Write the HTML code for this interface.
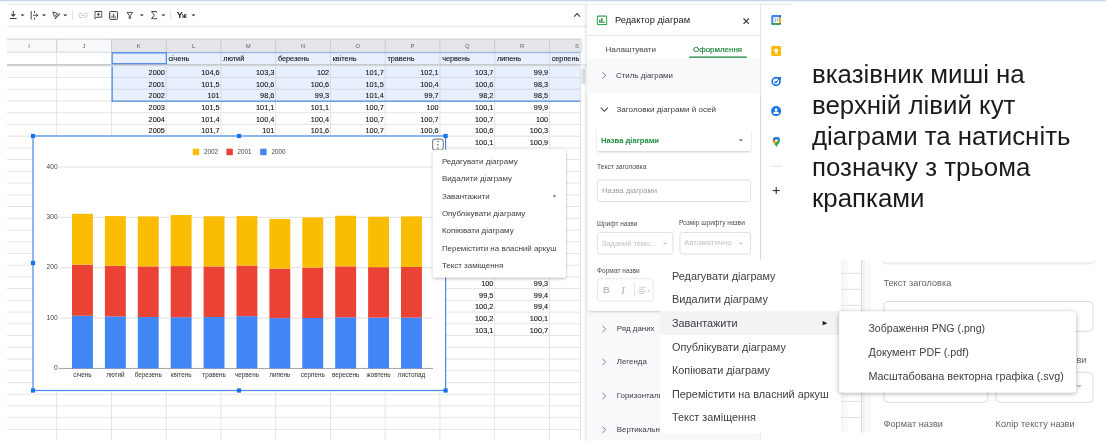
<!DOCTYPE html>
<html><head><meta charset="utf-8"><title>chart menu</title>
<style>
html,body{margin:0;padding:0;background:#fff;}
body{width:1106px;height:445px;position:relative;overflow:hidden;font-family:"Liberation Sans",sans-serif;}
.l{position:absolute;left:0;top:0;width:1106px;height:445px;display:block;will-change:transform;}
.t{position:absolute;white-space:nowrap;line-height:1;}
</style></head><body>
<svg class="l" width="1106" height="445" viewBox="0 0 1106 445"><rect x="0.00" y="0.00" width="1106.00" height="1.30" fill="#c9d3e6" />
<rect x="7.00" y="3.90" width="784.00" height="0.90" fill="#e1e3e6" />
<rect x="7.00" y="25.90" width="580.00" height="0.90" fill="#e2e4e7" />
<svg x="9.00" y="10.50" width="8.5" height="9.5" viewBox="0 0 9 10"><path d="M4.5 0.5v5.2M2.3 3.8l2.2 2.2 2.2-2.2" stroke="#3a3c3b" stroke-width="1.1" fill="none"/><path d="M1 8.4h7" stroke="#3a3c3b" stroke-width="1.1"/></svg>
<svg x="20.45" y="14.20" width="4.3" height="2.35" viewBox="0 0 10 5"><path d="M0 0h10L5 5z" fill="#3a3c3b"/></svg>
<svg x="30.00" y="10.50" width="9" height="9.5" viewBox="0 0 9 10"><path d="M1 0.5v9M4.5 0.5v2M4.5 7.5v2M3 5h5M6.3 3.4L8 5 6.3 6.6" stroke="#3a3c3b" stroke-width="1" fill="none"/></svg>
<svg x="41.85" y="14.20" width="4.3" height="2.35" viewBox="0 0 10 5"><path d="M0 0h10L5 5z" fill="#3a3c3b"/></svg>
<svg x="51.50" y="10.50" width="9.5" height="9.5" viewBox="0 0 9.5 10"><path d="M1 1.6l5.2 1.6-3.2 3.4z" stroke="#3a3c3b" stroke-width="1" fill="none" stroke-linejoin="round"/><path d="M3.2 8.8L8.6 3.2" stroke="#3a3c3b" stroke-width="1.2"/></svg>
<svg x="63.05" y="14.20" width="4.3" height="2.35" viewBox="0 0 10 5"><path d="M0 0h10L5 5z" fill="#3a3c3b"/></svg>
<rect x="72.30" y="10.00" width="0.80" height="10.50" fill="#dadce0" />
<svg x="78.00" y="12.30" width="10" height="6" viewBox="0 0 10 6"><path d="M4.2 0.8H3a2.2 2.2 0 0 0 0 4.4h1.2M5.8 0.8H7a2.2 2.2 0 0 1 0 4.4H5.8M3.2 3h3.6" fill="none" stroke="#c0c3c1" stroke-width="1"/></svg>
<svg x="94.30" y="11.00" width="8.2" height="8.6" viewBox="0 0 8.2 8.6"><path d="M0.6 0.6h7v5.6h-5.4l-1.6 1.6z" fill="none" stroke="#3a3c3b" stroke-width="1"/><path d="M4.1 1.9v3M2.6 3.4h3" stroke="#3a3c3b" stroke-width="0.9"/></svg>
<svg x="109.00" y="10.80" width="9.2" height="9.2" viewBox="0 0 9.2 9.2"><rect x="0.6" y="0.6" width="8" height="8" rx="1" fill="#eceff1" stroke="#3a3c3b" stroke-width="1"/><path d="M3 7V5M4.6 7V3M6.2 7V5.6" stroke="#3a3c3b" stroke-width="0.9"/></svg>
<svg x="126.30" y="11.80" width="7" height="7.2" viewBox="0 0 7 7.2"><path d="M0.6 0.6h5.8l-2.3 3v3h-1.2v-3z" fill="none" stroke="#3a3c3b" stroke-width="0.9" stroke-linejoin="round"/></svg>
<svg x="139.65" y="14.20" width="4.3" height="2.35" viewBox="0 0 10 5"><path d="M0 0h10L5 5z" fill="#3a3c3b"/></svg>
<svg x="150.80" y="11.00" width="6.4" height="8.4" viewBox="0 0 6.4 8.4"><path d="M5.9 1.6V0.6H0.7L3.6 4.2 0.7 7.8h5.2v-1" fill="none" stroke="#3a3c3b" stroke-width="1"/></svg>
<svg x="161.25" y="14.20" width="4.3" height="2.35" viewBox="0 0 10 5"><path d="M0 0h10L5 5z" fill="#3a3c3b"/></svg>
<rect x="170.30" y="10.00" width="0.80" height="10.50" fill="#dadce0" />
<svg x="191.25" y="14.20" width="4.3" height="2.35" viewBox="0 0 10 5"><path d="M0 0h10L5 5z" fill="#3a3c3b"/></svg>
<svg x="573.60" y="12.60" width="7" height="4.6" viewBox="0 0 7 4.6"><path d="M0.6 4L3.5 1 6.4 4" fill="none" stroke="#3a3c3b" stroke-width="1.1"/></svg>
<rect x="7.00" y="39.00" width="573.40" height="13.10" fill="#f8f9fa" />
<rect x="111.45" y="39.00" width="468.95" height="13.10" fill="#e4e6e9" />
<rect x="7.00" y="38.60" width="573.40" height="0.90" fill="#c8cacc" />
<rect x="56.25" y="39.00" width="0.90" height="13.00" fill="#c6c8cb" />
<rect x="111.00" y="39.00" width="0.90" height="13.00" fill="#c6c8cb" />
<rect x="165.75" y="39.00" width="0.90" height="13.00" fill="#c6c8cb" />
<rect x="220.50" y="39.00" width="0.90" height="13.00" fill="#c6c8cb" />
<rect x="275.25" y="39.00" width="0.90" height="13.00" fill="#c6c8cb" />
<rect x="330.00" y="39.00" width="0.90" height="13.00" fill="#c6c8cb" />
<rect x="384.75" y="39.00" width="0.90" height="13.00" fill="#c6c8cb" />
<rect x="439.50" y="39.00" width="0.90" height="13.00" fill="#c6c8cb" />
<rect x="494.25" y="39.00" width="0.90" height="13.00" fill="#c6c8cb" />
<rect x="549.00" y="39.00" width="0.90" height="13.00" fill="#c6c8cb" />
<rect x="111.45" y="52.10" width="468.95" height="48.86" fill="#e8f0fe" />
<rect x="7.00" y="77.05" width="573.40" height="0.90" fill="#e1e2e3" />
<rect x="7.00" y="88.78" width="573.40" height="0.90" fill="#e1e2e3" />
<rect x="7.00" y="100.51" width="573.40" height="0.90" fill="#e1e2e3" />
<rect x="7.00" y="112.24" width="573.40" height="0.90" fill="#e1e2e3" />
<rect x="7.00" y="123.97" width="573.40" height="0.90" fill="#e1e2e3" />
<rect x="7.00" y="135.70" width="573.40" height="0.90" fill="#e1e2e3" />
<rect x="7.00" y="147.43" width="573.40" height="0.90" fill="#e1e2e3" />
<rect x="7.00" y="159.16" width="573.40" height="0.90" fill="#e1e2e3" />
<rect x="7.00" y="170.89" width="573.40" height="0.90" fill="#e1e2e3" />
<rect x="7.00" y="182.62" width="573.40" height="0.90" fill="#e1e2e3" />
<rect x="7.00" y="194.35" width="573.40" height="0.90" fill="#e1e2e3" />
<rect x="7.00" y="206.08" width="573.40" height="0.90" fill="#e1e2e3" />
<rect x="7.00" y="217.81" width="573.40" height="0.90" fill="#e1e2e3" />
<rect x="7.00" y="229.54" width="573.40" height="0.90" fill="#e1e2e3" />
<rect x="7.00" y="241.27" width="573.40" height="0.90" fill="#e1e2e3" />
<rect x="7.00" y="253.00" width="573.40" height="0.90" fill="#e1e2e3" />
<rect x="7.00" y="264.73" width="573.40" height="0.90" fill="#e1e2e3" />
<rect x="7.00" y="276.46" width="573.40" height="0.90" fill="#e1e2e3" />
<rect x="7.00" y="288.19" width="573.40" height="0.90" fill="#e1e2e3" />
<rect x="7.00" y="299.92" width="573.40" height="0.90" fill="#e1e2e3" />
<rect x="7.00" y="311.65" width="573.40" height="0.90" fill="#e1e2e3" />
<rect x="7.00" y="323.38" width="573.40" height="0.90" fill="#e1e2e3" />
<rect x="7.00" y="335.11" width="573.40" height="0.90" fill="#e1e2e3" />
<rect x="7.00" y="346.84" width="573.40" height="0.90" fill="#e1e2e3" />
<rect x="7.00" y="358.57" width="573.40" height="0.90" fill="#e1e2e3" />
<rect x="7.00" y="370.30" width="573.40" height="0.90" fill="#e1e2e3" />
<rect x="7.00" y="382.03" width="573.40" height="0.90" fill="#e1e2e3" />
<rect x="7.00" y="393.76" width="573.40" height="0.90" fill="#e1e2e3" />
<rect x="7.00" y="405.49" width="573.40" height="0.90" fill="#e1e2e3" />
<rect x="7.00" y="417.22" width="573.40" height="0.90" fill="#e1e2e3" />
<rect x="7.00" y="428.95" width="573.40" height="0.90" fill="#e1e2e3" />
<rect x="7.00" y="51.70" width="573.40" height="0.90" fill="#cfd1d4" />
<rect x="56.25" y="52.00" width="0.90" height="388.00" fill="#e1e2e3" />
<rect x="111.00" y="52.00" width="0.90" height="388.00" fill="#e1e2e3" />
<rect x="165.75" y="52.00" width="0.90" height="388.00" fill="#e1e2e3" />
<rect x="220.50" y="52.00" width="0.90" height="388.00" fill="#e1e2e3" />
<rect x="275.25" y="52.00" width="0.90" height="388.00" fill="#e1e2e3" />
<rect x="330.00" y="52.00" width="0.90" height="388.00" fill="#e1e2e3" />
<rect x="384.75" y="52.00" width="0.90" height="388.00" fill="#e1e2e3" />
<rect x="439.50" y="52.00" width="0.90" height="388.00" fill="#e1e2e3" />
<rect x="494.25" y="52.00" width="0.90" height="388.00" fill="#e1e2e3" />
<rect x="549.00" y="52.00" width="0.90" height="388.00" fill="#e1e2e3" />
<rect x="111.45" y="77.05" width="468.95" height="0.90" fill="#d2dcf2" />
<rect x="111.45" y="88.78" width="468.95" height="0.90" fill="#d2dcf2" />
<rect x="165.75" y="52.00" width="0.90" height="48.96" fill="#d2dcf2" />
<rect x="220.50" y="52.00" width="0.90" height="48.96" fill="#d2dcf2" />
<rect x="275.25" y="52.00" width="0.90" height="48.96" fill="#d2dcf2" />
<rect x="330.00" y="52.00" width="0.90" height="48.96" fill="#d2dcf2" />
<rect x="384.75" y="52.00" width="0.90" height="48.96" fill="#d2dcf2" />
<rect x="439.50" y="52.00" width="0.90" height="48.96" fill="#d2dcf2" />
<rect x="494.25" y="52.00" width="0.90" height="48.96" fill="#d2dcf2" />
<rect x="549.00" y="52.00" width="0.90" height="48.96" fill="#d2dcf2" />
<rect x="579.95" y="39.00" width="0.90" height="401.60" fill="#dcddde" />
<defs><linearGradient id="fz" x1="0" y1="0" x2="0" y2="1"><stop offset="0" stop-color="#bdbfc2"/><stop offset="1" stop-color="#e2e3e5"/></linearGradient></defs>
<rect x="7.00" y="64.10" width="573.40" height="2.30" fill="url(#fz)" />
<rect x="580.40" y="64.10" width="6.40" height="2.30" fill="#e6e7e9" />
<rect x="580.40" y="39.00" width="1.80" height="13.10" fill="#e4e6e9" />
<rect x="111.55" y="66.40" width="1.20" height="35.06" fill="#4a86e8" />
<rect x="111.55" y="100.56" width="468.95" height="1.20" fill="#4a86e8" />
<rect x="111.45" y="52.20" width="468.95" height="1.00" fill="#8db0ee" />
<rect x="112.15" y="52.90" width="54.15" height="10.80" fill="#e8f0fe" stroke="#4a86e8" stroke-width="1.2" />
<rect x="581.60" y="68.00" width="3.80" height="16.00" fill="#dadce0" rx="1.9" />
<rect x="33.00" y="136.00" width="412.60" height="254.50" fill="#fff" stroke="#4a86e8" stroke-width="1.2" />
<rect x="58.60" y="166.55" width="374.40" height="0.90" fill="#dedede" />
<rect x="58.60" y="216.90" width="374.40" height="0.90" fill="#dedede" />
<rect x="58.60" y="267.25" width="374.40" height="0.90" fill="#dedede" />
<rect x="58.60" y="317.60" width="374.40" height="0.90" fill="#dedede" />
<rect x="58.60" y="367.95" width="374.40" height="0.90" fill="#9a9a9a" />
<rect x="72.00" y="315.73" width="20.90" height="52.67" fill="#4285f4" />
<rect x="72.00" y="264.63" width="20.90" height="51.11" fill="#ea4335" />
<rect x="72.00" y="213.78" width="20.90" height="50.85" fill="#fbbc04" />
<rect x="104.90" y="316.39" width="20.90" height="52.01" fill="#4285f4" />
<rect x="104.90" y="265.74" width="20.90" height="50.65" fill="#ea4335" />
<rect x="104.90" y="216.09" width="20.90" height="49.65" fill="#fbbc04" />
<rect x="137.80" y="317.04" width="20.90" height="51.36" fill="#4285f4" />
<rect x="137.80" y="266.39" width="20.90" height="50.65" fill="#ea4335" />
<rect x="137.80" y="216.39" width="20.90" height="50.00" fill="#fbbc04" />
<rect x="170.70" y="317.19" width="20.90" height="51.21" fill="#4285f4" />
<rect x="170.70" y="266.09" width="20.90" height="51.11" fill="#ea4335" />
<rect x="170.70" y="215.03" width="20.90" height="51.05" fill="#fbbc04" />
<rect x="203.60" y="316.99" width="20.90" height="51.41" fill="#4285f4" />
<rect x="203.60" y="266.44" width="20.90" height="50.55" fill="#ea4335" />
<rect x="203.60" y="216.24" width="20.90" height="50.20" fill="#fbbc04" />
<rect x="236.50" y="316.19" width="20.90" height="52.21" fill="#4285f4" />
<rect x="236.50" y="265.53" width="20.90" height="50.65" fill="#ea4335" />
<rect x="236.50" y="216.09" width="20.90" height="49.44" fill="#fbbc04" />
<rect x="269.40" y="318.10" width="20.90" height="50.30" fill="#4285f4" />
<rect x="269.40" y="268.61" width="20.90" height="49.49" fill="#ea4335" />
<rect x="269.40" y="219.01" width="20.90" height="49.59" fill="#fbbc04" />
<rect x="302.30" y="318.00" width="20.90" height="50.40" fill="#4285f4" />
<rect x="302.30" y="267.55" width="20.90" height="50.45" fill="#ea4335" />
<rect x="302.30" y="217.40" width="20.90" height="50.15" fill="#fbbc04" />
<rect x="335.20" y="317.35" width="20.90" height="51.05" fill="#4285f4" />
<rect x="335.20" y="266.34" width="20.90" height="51.00" fill="#ea4335" />
<rect x="335.20" y="215.79" width="20.90" height="50.55" fill="#fbbc04" />
<rect x="368.10" y="317.65" width="20.90" height="50.75" fill="#4285f4" />
<rect x="368.10" y="267.15" width="20.90" height="50.50" fill="#ea4335" />
<rect x="368.10" y="216.70" width="20.90" height="50.45" fill="#fbbc04" />
<rect x="401.00" y="317.60" width="20.90" height="50.80" fill="#4285f4" />
<rect x="401.00" y="266.94" width="20.90" height="50.65" fill="#ea4335" />
<rect x="401.00" y="216.34" width="20.90" height="50.60" fill="#fbbc04" />
<rect x="192.80" y="148.70" width="6.40" height="6.50" fill="#fbbc04" />
<rect x="226.40" y="148.70" width="6.40" height="6.50" fill="#ea4335" />
<rect x="260.20" y="148.70" width="6.40" height="6.50" fill="#4285f4" />
<rect x="30.90" y="133.90" width="4.20" height="4.20" fill="#1a73e8" />
<rect x="236.90" y="133.90" width="4.20" height="4.20" fill="#1a73e8" />
<rect x="443.50" y="133.90" width="4.20" height="4.20" fill="#1a73e8" />
<rect x="30.90" y="260.90" width="4.20" height="4.20" fill="#1a73e8" />
<rect x="443.50" y="260.90" width="4.20" height="4.20" fill="#1a73e8" />
<rect x="30.90" y="388.40" width="4.20" height="4.20" fill="#1a73e8" />
<rect x="236.90" y="388.40" width="4.20" height="4.20" fill="#1a73e8" />
<rect x="443.50" y="388.40" width="4.20" height="4.20" fill="#1a73e8" />
<rect x="432.60" y="139.10" width="10.70" height="10.80" fill="#fff" rx="2.4" stroke="#8a8a8a" stroke-width="1.2" />
<circle cx="437.9" cy="141.5" r="0.75" fill="#4d4d4d"/>
<circle cx="437.9" cy="144.7" r="0.75" fill="#4d4d4d"/>
<circle cx="437.9" cy="147.9" r="0.75" fill="#4d4d4d"/>
<defs>
<filter id="sh1" x="-20%" y="-20%" width="140%" height="140%"><feGaussianBlur in="SourceAlpha" stdDeviation="1.6"/><feOffset dx="0" dy="0.8"/><feComponentTransfer><feFuncA type="linear" slope="0.32"/></feComponentTransfer><feMerge><feMergeNode/><feMergeNode in="SourceGraphic"/></feMerge></filter>
<filter id="sh2" x="-20%" y="-20%" width="140%" height="140%"><feGaussianBlur in="SourceAlpha" stdDeviation="2.6"/><feOffset dx="0" dy="1.2"/><feComponentTransfer><feFuncA type="linear" slope="0.34"/></feComponentTransfer><feMerge><feMergeNode/><feMergeNode in="SourceGraphic"/></feMerge></filter>
<filter id="sh3" x="-5%" y="-20%" width="110%" height="140%"><feGaussianBlur in="SourceAlpha" stdDeviation="0.9"/><feOffset dx="0" dy="0.5"/><feComponentTransfer><feFuncA type="linear" slope="0.2"/></feComponentTransfer><feMerge><feMergeNode/><feMergeNode in="SourceGraphic"/></feMerge></filter>
<linearGradient id="sbs" x1="0" y1="0" x2="1" y2="0"><stop offset="0" stop-color="#000" stop-opacity="0"/><stop offset="1" stop-color="#000" stop-opacity="0.09"/></linearGradient>
</defs>
<rect x="583.50" y="4.80" width="3.50" height="436.00" fill="url(#sbs)" />
<rect x="587.00" y="4.80" width="173.00" height="435.60" fill="#f8f9fa" />
<rect x="587.00" y="4.80" width="173.00" height="54.00" fill="#fff" />
<rect x="759.90" y="4.80" width="0.90" height="435.60" fill="#e2e3e5" />
<rect x="587.00" y="34.90" width="173.00" height="0.90" fill="#e1e3e6" />
<svg x="596.50" y="15.30" width="11" height="10" viewBox="0 0 11 10"><rect x="0.7" y="0.7" width="9.6" height="8.6" rx="1.2" fill="#fff" stroke="#34a853" stroke-width="1.3"/><path d="M3.4 7.6V4.4M5.4 7.6V2.7M7.5 7.6V6.3" stroke="#188038" stroke-width="1.3"/></svg>
<svg x="743.00" y="18.00" width="6.4" height="6.4" viewBox="0 0 6.4 6.4"><path d="M0.5 0.5l5.4 5.4M5.9 0.5L0.5 5.9" stroke="#3c4043" stroke-width="1.15"/></svg>
<rect x="689.00" y="56.40" width="58.00" height="1.30" fill="#188038" rx="0.6" />
<svg x="601.80" y="71.60" width="4.6" height="7.4" viewBox="0 0 4.6 7.4"><path d="M0.6 0.5l3.3 3.2-3.3 3.2" fill="none" stroke="#5f6368" stroke-width="0.8"/></svg>
<rect x="587.50" y="92.50" width="172.50" height="218.30" fill="#fff" rx="3" filter="url(#sh3)"/>
<svg x="600.20" y="107.00" width="8.2" height="5.2" viewBox="0 0 7.6 4.8"><path d="M0.5 0.6l3.3 3.4 3.3-3.4" fill="none" stroke="#444746" stroke-width="1"/></svg>
<rect x="597.00" y="128.50" width="154.00" height="22.50" fill="#fff" rx="2.5" filter="url(#sh3)"/>
<svg x="738.65" y="139.20" width="4.5" height="2.45" viewBox="0 0 10 5"><path d="M0 0h10L5 5z" fill="#5f6368"/></svg>
<rect x="597.45" y="179.95" width="153.10" height="21.60" fill="#fff" rx="2.5" stroke="#dadce0" stroke-width="0.9" />
<rect x="597.45" y="232.45" width="75.60" height="21.60" fill="#fff" rx="2.5" stroke="#dadce0" stroke-width="0.9" />
<rect x="679.95" y="232.45" width="70.60" height="21.60" fill="#fff" rx="2.5" stroke="#dadce0" stroke-width="0.9" />
<svg x="662.65" y="242.40" width="4.3" height="2.35" viewBox="0 0 10 5"><path d="M0 0h10L5 5z" fill="#bdc1c6"/></svg>
<svg x="738.65" y="242.40" width="4.3" height="2.35" viewBox="0 0 10 5"><path d="M0 0h10L5 5z" fill="#bdc1c6"/></svg>
<rect x="597.45" y="278.75" width="55.80" height="22.30" fill="#fff" rx="2.5" stroke="#e3e5e8" stroke-width="0.9" />
<rect x="633.90" y="283.20" width="0.80" height="13.50" fill="#dadce0" />
<svg x="639.00" y="286.50" width="7.4" height="7.4" viewBox="0 0 7.2 7.4"><path d="M0 0.6h7.2M0 2.7h4.8M0 4.8h7.2M0 6.9h4.8" stroke="#bdc1c6" stroke-width="0.9"/></svg>
<svg x="647.25" y="290.10" width="3.3" height="1.8499999999999999" viewBox="0 0 10 5"><path d="M0 0h10L5 5z" fill="#bdc1c6"/></svg>
<svg x="601.80" y="325.30" width="4.6" height="7.4" viewBox="0 0 4.6 7.4"><path d="M0.6 0.5l3.3 3.2-3.3 3.2" fill="none" stroke="#5f6368" stroke-width="0.8"/></svg>
<svg x="601.80" y="358.30" width="4.6" height="7.4" viewBox="0 0 4.6 7.4"><path d="M0.6 0.5l3.3 3.2-3.3 3.2" fill="none" stroke="#5f6368" stroke-width="0.8"/></svg>
<svg x="601.80" y="392.30" width="4.6" height="7.4" viewBox="0 0 4.6 7.4"><path d="M0.6 0.5l3.3 3.2-3.3 3.2" fill="none" stroke="#5f6368" stroke-width="0.8"/></svg>
<svg x="601.80" y="426.10" width="4.6" height="7.4" viewBox="0 0 4.6 7.4"><path d="M0.6 0.5l3.3 3.2-3.3 3.2" fill="none" stroke="#5f6368" stroke-width="0.8"/></svg>
<svg x="771.00" y="14.80" width="10.4" height="10.6" viewBox="0 0 10.4 10.6"><rect x="0.3" y="0.3" width="9.8" height="10" rx="1.4" fill="#4285f4"/><rect x="2.3" y="2.4" width="5.9" height="5.8" fill="#fff"/><path d="M8.2 2.4h1.9v5.8h-1.9z" fill="#fbbc04"/><path d="M8.2 0.3h0.5a1.4 1.4 0 0 1 1.4 1.4v0.7H8.2z" fill="#1967d2"/><path d="M0.3 8.2h7.9v2.1H1.7a1.4 1.4 0 0 1-1.4-1.4z" fill="#34a853"/><path d="M8.2 8.2h1.9l-1.9 2.1z" fill="#ea4335"/><path d="M3.7 4h1v2.6M3.7 6.6h1.4M6 4h0.9v2.6" stroke="#4285f4" stroke-width="0.7" fill="none"/></svg>
<svg x="771.00" y="45.80" width="10.4" height="10.6" viewBox="0 0 10.4 10.6"><rect x="0.3" y="0.3" width="9.8" height="10" rx="1.3" fill="#fbbc04"/><circle cx="5.2" cy="4.5" r="1.9" fill="#fff"/><rect x="4.1" y="6.6" width="2.2" height="1.3" fill="#fff"/></svg>
<svg x="771.00" y="76.00" width="10.4" height="10.6" viewBox="0 0 10.4 10.6"><circle cx="5.1" cy="5.5" r="3.9" fill="none" stroke="#1a73e8" stroke-width="1.7"/><path d="M3.5 5.5l1.3 1.3L7 4.4" fill="none" stroke="#1a73e8" stroke-width="1.3"/><circle cx="8.4" cy="2.5" r="1.5" fill="#0b57d0"/><path d="M8.4 2.5l1.6-1.6" stroke="#1a73e8" stroke-width="1.2"/></svg>
<svg x="771.00" y="106.00" width="10.2" height="10.2" viewBox="0 0 10.2 10.2"><circle cx="5.1" cy="5.1" r="5" fill="#1a73e8"/><circle cx="5.1" cy="3.8" r="1.5" fill="#fff"/><path d="M2.2 7.6c0-1.5 1.9-2 2.9-2s2.9 0.5 2.9 2v0.4H2.2z" fill="#fff"/></svg>
<svg x="772.60" y="136.80" width="7.6" height="10.4" viewBox="0 0 7.6 10.4"><clipPath id="pin"><path d="M3.8 0.2a3.6 3.6 0 0 0-3.6 3.6c0 2.4 2.4 3.8 3.6 6.4 1.2-2.6 3.6-4 3.6-6.4A3.6 3.6 0 0 0 3.8 0.2z"/></clipPath><g clip-path="url(#pin)"><rect width="7.6" height="10.4" fill="#34a853"/><path d="M3.8 3.8L-2 6.5V-2H10V1.5z" fill="#1a73e8"/><path d="M3.8 3.8L-2 1.2V6z" fill="#ea4335"/><path d="M3.8 3.8L-2 5.6 1.8 8.2z" fill="#fbbc04"/></g><circle cx="3.8" cy="3.8" r="1.25" fill="#fff"/></svg>
<rect x="771.00" y="165.80" width="11.00" height="0.80" fill="#dadce0" />
<svg x="772.40" y="186.80" width="7.6" height="7.6" viewBox="0 0 7.6 7.6"><path d="M3.8 0.2v7.2M0.2 3.8h7.2" stroke="#202124" stroke-width="1"/></svg></svg>
<div class="l"><span class="t" style="top:11.38px;font-size:9px;color:#202124;font-weight:700;left:176.80px;">Y</span>
<span class="t" style="top:13.41px;font-size:6.6px;color:#202124;font-weight:700;left:182.00px;">ж</span>
<span class="t" style="top:43.81px;font-size:5.9px;color:#5f6368;left:-120.90px;width:300px;text-align:center;">I</span>
<span class="t" style="top:43.81px;font-size:5.9px;color:#5f6368;left:-65.92px;width:300px;text-align:center;">J</span>
<span class="t" style="top:43.81px;font-size:5.9px;color:#5f6368;left:-11.18px;width:300px;text-align:center;">K</span>
<span class="t" style="top:43.81px;font-size:5.9px;color:#5f6368;left:43.57px;width:300px;text-align:center;">L</span>
<span class="t" style="top:43.81px;font-size:5.9px;color:#5f6368;left:98.32px;width:300px;text-align:center;">M</span>
<span class="t" style="top:43.81px;font-size:5.9px;color:#5f6368;left:153.07px;width:300px;text-align:center;">N</span>
<span class="t" style="top:43.81px;font-size:5.9px;color:#5f6368;left:207.82px;width:300px;text-align:center;">O</span>
<span class="t" style="top:43.81px;font-size:5.9px;color:#5f6368;left:262.57px;width:300px;text-align:center;">P</span>
<span class="t" style="top:43.81px;font-size:5.9px;color:#5f6368;left:317.32px;width:300px;text-align:center;">Q</span>
<span class="t" style="top:43.81px;font-size:5.9px;color:#5f6368;left:372.08px;width:300px;text-align:center;">R</span>
<span class="t" style="top:43.81px;font-size:5.9px;color:#5f6368;right:527.20px;">S</span>
<span class="t" style="top:54.82px;font-size:7.3px;color:#111;left:168.40px;-webkit-text-stroke:0.1px #111;">січень</span>
<span class="t" style="top:54.82px;font-size:7.3px;color:#111;left:223.15px;-webkit-text-stroke:0.1px #111;">лютий</span>
<span class="t" style="top:54.82px;font-size:7.3px;color:#111;left:277.90px;-webkit-text-stroke:0.1px #111;">березень</span>
<span class="t" style="top:54.82px;font-size:7.3px;color:#111;left:332.65px;-webkit-text-stroke:0.1px #111;">квітень</span>
<span class="t" style="top:54.82px;font-size:7.3px;color:#111;left:387.40px;-webkit-text-stroke:0.1px #111;">травень</span>
<span class="t" style="top:54.82px;font-size:7.3px;color:#111;left:442.15px;-webkit-text-stroke:0.1px #111;">червень</span>
<span class="t" style="top:54.82px;font-size:7.3px;color:#111;left:496.90px;-webkit-text-stroke:0.1px #111;">липень</span>
<span class="t" style="top:54.82px;font-size:7.3px;color:#111;left:551.65px;-webkit-text-stroke:0.1px #111;">серпень</span>
<span class="t" style="top:68.82px;font-size:7.3px;color:#111;right:941.20px;-webkit-text-stroke:0.1px #111;">2000</span>
<span class="t" style="top:68.82px;font-size:7.3px;color:#111;right:886.45px;-webkit-text-stroke:0.1px #111;">104,6</span>
<span class="t" style="top:68.82px;font-size:7.3px;color:#111;right:831.70px;-webkit-text-stroke:0.1px #111;">103,3</span>
<span class="t" style="top:68.82px;font-size:7.3px;color:#111;right:776.95px;-webkit-text-stroke:0.1px #111;">102</span>
<span class="t" style="top:68.82px;font-size:7.3px;color:#111;right:722.20px;-webkit-text-stroke:0.1px #111;">101,7</span>
<span class="t" style="top:68.82px;font-size:7.3px;color:#111;right:667.45px;-webkit-text-stroke:0.1px #111;">102,1</span>
<span class="t" style="top:68.82px;font-size:7.3px;color:#111;right:612.70px;-webkit-text-stroke:0.1px #111;">103,7</span>
<span class="t" style="top:68.82px;font-size:7.3px;color:#111;right:557.95px;-webkit-text-stroke:0.1px #111;">99,9</span>
<span class="t" style="top:80.55px;font-size:7.3px;color:#111;right:941.20px;-webkit-text-stroke:0.1px #111;">2001</span>
<span class="t" style="top:80.55px;font-size:7.3px;color:#111;right:886.45px;-webkit-text-stroke:0.1px #111;">101,5</span>
<span class="t" style="top:80.55px;font-size:7.3px;color:#111;right:831.70px;-webkit-text-stroke:0.1px #111;">100,6</span>
<span class="t" style="top:80.55px;font-size:7.3px;color:#111;right:776.95px;-webkit-text-stroke:0.1px #111;">100,6</span>
<span class="t" style="top:80.55px;font-size:7.3px;color:#111;right:722.20px;-webkit-text-stroke:0.1px #111;">101,5</span>
<span class="t" style="top:80.55px;font-size:7.3px;color:#111;right:667.45px;-webkit-text-stroke:0.1px #111;">100,4</span>
<span class="t" style="top:80.55px;font-size:7.3px;color:#111;right:612.70px;-webkit-text-stroke:0.1px #111;">100,6</span>
<span class="t" style="top:80.55px;font-size:7.3px;color:#111;right:557.95px;-webkit-text-stroke:0.1px #111;">98,3</span>
<span class="t" style="top:92.28px;font-size:7.3px;color:#111;right:941.20px;-webkit-text-stroke:0.1px #111;">2002</span>
<span class="t" style="top:92.28px;font-size:7.3px;color:#111;right:886.45px;-webkit-text-stroke:0.1px #111;">101</span>
<span class="t" style="top:92.28px;font-size:7.3px;color:#111;right:831.70px;-webkit-text-stroke:0.1px #111;">98,6</span>
<span class="t" style="top:92.28px;font-size:7.3px;color:#111;right:776.95px;-webkit-text-stroke:0.1px #111;">99,3</span>
<span class="t" style="top:92.28px;font-size:7.3px;color:#111;right:722.20px;-webkit-text-stroke:0.1px #111;">101,4</span>
<span class="t" style="top:92.28px;font-size:7.3px;color:#111;right:667.45px;-webkit-text-stroke:0.1px #111;">99,7</span>
<span class="t" style="top:92.28px;font-size:7.3px;color:#111;right:612.70px;-webkit-text-stroke:0.1px #111;">98,2</span>
<span class="t" style="top:92.28px;font-size:7.3px;color:#111;right:557.95px;-webkit-text-stroke:0.1px #111;">98,5</span>
<span class="t" style="top:104.01px;font-size:7.3px;color:#111;right:941.20px;-webkit-text-stroke:0.1px #111;">2003</span>
<span class="t" style="top:104.01px;font-size:7.3px;color:#111;right:886.45px;-webkit-text-stroke:0.1px #111;">101,5</span>
<span class="t" style="top:104.01px;font-size:7.3px;color:#111;right:831.70px;-webkit-text-stroke:0.1px #111;">101,1</span>
<span class="t" style="top:104.01px;font-size:7.3px;color:#111;right:776.95px;-webkit-text-stroke:0.1px #111;">101,1</span>
<span class="t" style="top:104.01px;font-size:7.3px;color:#111;right:722.20px;-webkit-text-stroke:0.1px #111;">100,7</span>
<span class="t" style="top:104.01px;font-size:7.3px;color:#111;right:667.45px;-webkit-text-stroke:0.1px #111;">100</span>
<span class="t" style="top:104.01px;font-size:7.3px;color:#111;right:612.70px;-webkit-text-stroke:0.1px #111;">100,1</span>
<span class="t" style="top:104.01px;font-size:7.3px;color:#111;right:557.95px;-webkit-text-stroke:0.1px #111;">99,9</span>
<span class="t" style="top:115.74px;font-size:7.3px;color:#111;right:941.20px;-webkit-text-stroke:0.1px #111;">2004</span>
<span class="t" style="top:115.74px;font-size:7.3px;color:#111;right:886.45px;-webkit-text-stroke:0.1px #111;">101,4</span>
<span class="t" style="top:115.74px;font-size:7.3px;color:#111;right:831.70px;-webkit-text-stroke:0.1px #111;">100,4</span>
<span class="t" style="top:115.74px;font-size:7.3px;color:#111;right:776.95px;-webkit-text-stroke:0.1px #111;">100,4</span>
<span class="t" style="top:115.74px;font-size:7.3px;color:#111;right:722.20px;-webkit-text-stroke:0.1px #111;">100,7</span>
<span class="t" style="top:115.74px;font-size:7.3px;color:#111;right:667.45px;-webkit-text-stroke:0.1px #111;">100,7</span>
<span class="t" style="top:115.74px;font-size:7.3px;color:#111;right:612.70px;-webkit-text-stroke:0.1px #111;">100,7</span>
<span class="t" style="top:115.74px;font-size:7.3px;color:#111;right:557.95px;-webkit-text-stroke:0.1px #111;">100</span>
<span class="t" style="top:127.47px;font-size:7.3px;color:#111;right:941.20px;-webkit-text-stroke:0.1px #111;">2005</span>
<span class="t" style="top:127.47px;font-size:7.3px;color:#111;right:886.45px;-webkit-text-stroke:0.1px #111;">101,7</span>
<span class="t" style="top:127.47px;font-size:7.3px;color:#111;right:831.70px;-webkit-text-stroke:0.1px #111;">101</span>
<span class="t" style="top:127.47px;font-size:7.3px;color:#111;right:776.95px;-webkit-text-stroke:0.1px #111;">101,6</span>
<span class="t" style="top:127.47px;font-size:7.3px;color:#111;right:722.20px;-webkit-text-stroke:0.1px #111;">100,7</span>
<span class="t" style="top:127.47px;font-size:7.3px;color:#111;right:667.45px;-webkit-text-stroke:0.1px #111;">100,6</span>
<span class="t" style="top:127.47px;font-size:7.3px;color:#111;right:612.70px;-webkit-text-stroke:0.1px #111;">100,6</span>
<span class="t" style="top:127.47px;font-size:7.3px;color:#111;right:557.95px;-webkit-text-stroke:0.1px #111;">100,3</span>
<span class="t" style="top:139.20px;font-size:7.3px;color:#111;right:612.70px;-webkit-text-stroke:0.1px #111;">100,1</span>
<span class="t" style="top:139.20px;font-size:7.3px;color:#111;right:557.95px;-webkit-text-stroke:0.1px #111;">100,9</span>
<span class="t" style="top:279.96px;font-size:7.3px;color:#111;right:612.70px;-webkit-text-stroke:0.1px #111;">100</span>
<span class="t" style="top:279.96px;font-size:7.3px;color:#111;right:557.95px;-webkit-text-stroke:0.1px #111;">99,3</span>
<span class="t" style="top:291.69px;font-size:7.3px;color:#111;right:612.70px;-webkit-text-stroke:0.1px #111;">99,5</span>
<span class="t" style="top:291.69px;font-size:7.3px;color:#111;right:557.95px;-webkit-text-stroke:0.1px #111;">99,4</span>
<span class="t" style="top:303.42px;font-size:7.3px;color:#111;right:612.70px;-webkit-text-stroke:0.1px #111;">100,2</span>
<span class="t" style="top:303.42px;font-size:7.3px;color:#111;right:557.95px;-webkit-text-stroke:0.1px #111;">99,4</span>
<span class="t" style="top:315.15px;font-size:7.3px;color:#111;right:612.70px;-webkit-text-stroke:0.1px #111;">100,2</span>
<span class="t" style="top:315.15px;font-size:7.3px;color:#111;right:557.95px;-webkit-text-stroke:0.1px #111;">100,1</span>
<span class="t" style="top:326.88px;font-size:7.3px;color:#111;right:612.70px;-webkit-text-stroke:0.1px #111;">103,1</span>
<span class="t" style="top:326.88px;font-size:7.3px;color:#111;right:557.95px;-webkit-text-stroke:0.1px #111;">100,7</span>
<span class="t" style="top:163.71px;font-size:6.6px;color:#444;right:1048.40px;">400</span>
<span class="t" style="top:214.06px;font-size:6.6px;color:#444;right:1048.40px;">300</span>
<span class="t" style="top:264.41px;font-size:6.6px;color:#444;right:1048.40px;">200</span>
<span class="t" style="top:314.76px;font-size:6.6px;color:#444;right:1048.40px;">100</span>
<span class="t" style="top:365.11px;font-size:6.6px;color:#444;right:1048.40px;">0</span>
<span class="t" style="top:372.12px;font-size:6.35px;color:#333;left:-67.55px;width:300px;text-align:center;">січень</span>
<span class="t" style="top:372.12px;font-size:6.35px;color:#333;left:-34.65px;width:300px;text-align:center;">лютий</span>
<span class="t" style="top:372.12px;font-size:6.35px;color:#333;left:-1.75px;width:300px;text-align:center;">березень</span>
<span class="t" style="top:372.12px;font-size:6.35px;color:#333;left:31.15px;width:300px;text-align:center;">квітень</span>
<span class="t" style="top:372.12px;font-size:6.35px;color:#333;left:64.05px;width:300px;text-align:center;">травень</span>
<span class="t" style="top:372.12px;font-size:6.35px;color:#333;left:96.95px;width:300px;text-align:center;">червень</span>
<span class="t" style="top:372.12px;font-size:6.35px;color:#333;left:129.85px;width:300px;text-align:center;">липень</span>
<span class="t" style="top:372.12px;font-size:6.35px;color:#333;left:162.75px;width:300px;text-align:center;">серпень</span>
<span class="t" style="top:372.12px;font-size:6.35px;color:#333;left:195.65px;width:300px;text-align:center;">вересень</span>
<span class="t" style="top:372.12px;font-size:6.35px;color:#333;left:228.55px;width:300px;text-align:center;">жовтень</span>
<span class="t" style="top:372.12px;font-size:6.35px;color:#333;left:261.45px;width:300px;text-align:center;">листопад</span>
<span class="t" style="top:148.97px;font-size:6.3px;color:#444;left:204.00px;">2002</span>
<span class="t" style="top:148.97px;font-size:6.3px;color:#444;left:237.60px;">2001</span>
<span class="t" style="top:148.97px;font-size:6.3px;color:#444;left:271.40px;">2000</span>
<span class="t" style="top:16.47px;font-size:9.25px;color:#202124;left:615.00px;">Редактор діаграм</span>
<span class="t" style="top:46.04px;font-size:8.1px;color:#5f6368;left:605.40px;-webkit-text-stroke:0.15px #5f6368;">Налаштувати</span>
<span class="t" style="top:46.17px;font-size:7.95px;color:#188038;left:693.00px;-webkit-text-stroke:0.15px #188038;">Оформлення</span>
<span class="t" style="top:71.51px;font-size:7.9px;color:#3c4043;left:616.00px;">Стиль діаграми</span>
<span class="t" style="top:106.09px;font-size:8.05px;color:#3c4043;left:616.50px;">Заголовки діаграми й осей</span>
<span class="t" style="top:136.57px;font-size:7.6px;color:#1e8e3e;font-weight:700;left:601.00px;">Назва діаграми</span>
<span class="t" style="top:164.03px;font-size:6.7px;color:#4a4d51;left:597.00px;">Текст заголовка</span>
<span class="t" style="top:187.08px;font-size:7.7px;color:#9aa0a6;left:602.00px;">Назва діаграми</span>
<span class="t" style="top:221.10px;font-size:6.5px;color:#4a4d51;left:597.00px;">Шрифт назви</span>
<span class="t" style="top:220.41px;font-size:6.6px;color:#4a4d51;left:679.00px;">Розмір шрифту назви</span>
<span class="t" style="top:239.74px;font-size:7.4px;color:#bdc1c6;left:602.00px;">Заданий темо...</span>
<span class="t" style="top:239.31px;font-size:7.9px;color:#bdc1c6;left:684.00px;">Автоматично</span>
<span class="t" style="top:267.61px;font-size:6.6px;color:#4a4d51;left:597.00px;">Формат назви</span>
<span class="t" style="top:285.83px;font-size:9.3px;color:#b9bdc2;font-weight:700;left:602.90px;">B</span>
<span class="t" style="top:285.57px;font-size:9.6px;color:#b9bdc2;font-weight:700;left:621.20px;font-style:italic;font-family:'Liberation Serif',serif;">I</span>
<span class="t" style="top:325.41px;font-size:7.9px;color:#3c4043;left:616.80px;">Ряд даних</span>
<span class="t" style="top:358.41px;font-size:7.9px;color:#3c4043;left:616.80px;">Легенда</span>
<span class="t" style="top:392.41px;font-size:7.9px;color:#3c4043;left:616.80px;">Горизонтальна вісь</span>
<span class="t" style="top:426.21px;font-size:7.9px;color:#3c4043;left:616.80px;">Вертикальна вісь</span></div>
<svg class="l" width="1106" height="445" viewBox="0 0 1106 445"><rect x="432.90" y="149.70" width="133.10" height="127.80" fill="#fff" rx="2" filter="url(#sh1)"/>
<svg x="553.20" y="194.30" width="3.3" height="3.5" viewBox="0 0 3 3.2"><path d="M0 0l3 1.6-3 1.6z" fill="#80868b"/></svg></svg>
<div class="l"><span class="t" style="top:157.97px;font-size:7.95px;color:#3c4043;left:441.90px;">Редагувати діаграму</span>
<span class="t" style="top:175.29px;font-size:7.95px;color:#3c4043;left:441.90px;">Видалити діаграму</span>
<span class="t" style="top:192.61px;font-size:7.95px;color:#3c4043;left:441.90px;">Завантажити</span>
<span class="t" style="top:209.93px;font-size:7.95px;color:#3c4043;left:441.90px;">Опублікувати діаграму</span>
<span class="t" style="top:227.25px;font-size:7.95px;color:#3c4043;left:441.90px;">Копіювати діаграму</span>
<span class="t" style="top:244.57px;font-size:7.95px;color:#3c4043;left:441.90px;">Перемістити на власний аркуш</span>
<span class="t" style="top:261.89px;font-size:7.95px;color:#3c4043;left:441.90px;">Текст заміщення</span></div>
<svg class="l" width="1106" height="445" viewBox="0 0 1106 445"><defs><linearGradient id="g3a" x1="0" y1="0" x2="1" y2="0"><stop offset="0" stop-color="#f3f4f5"/><stop offset="0.45" stop-color="#fff"/></linearGradient><linearGradient id="g3b" x1="0" y1="0" x2="1" y2="0"><stop offset="0" stop-color="#f1f1f1"/><stop offset="1" stop-color="#fff"/></linearGradient></defs>
<rect x="841.00" y="260.00" width="265.00" height="172.70" fill="#fff" />
<rect x="841.00" y="260.00" width="21.00" height="172.70" fill="url(#g3a)" />
<rect x="841.00" y="272.80" width="20.50" height="1.00" fill="#dfe0e2" />
<rect x="841.00" y="288.82" width="20.50" height="1.00" fill="#dfe0e2" />
<rect x="841.00" y="304.84" width="20.50" height="1.00" fill="#dfe0e2" />
<rect x="841.00" y="320.86" width="20.50" height="1.00" fill="#dfe0e2" />
<rect x="841.00" y="336.88" width="20.50" height="1.00" fill="#dfe0e2" />
<rect x="841.00" y="352.90" width="20.50" height="1.00" fill="#dfe0e2" />
<rect x="841.00" y="368.92" width="20.50" height="1.00" fill="#dfe0e2" />
<rect x="841.00" y="384.94" width="20.50" height="1.00" fill="#dfe0e2" />
<rect x="841.00" y="400.96" width="20.50" height="1.00" fill="#dfe0e2" />
<rect x="841.00" y="416.98" width="20.50" height="1.00" fill="#dfe0e2" />
<rect x="861.30" y="260.00" width="1.00" height="172.70" fill="#c9cbce" />
<rect x="862.30" y="260.00" width="6.00" height="172.70" fill="url(#g3b)" />
<rect x="868.70" y="260.00" width="0.80" height="172.70" fill="#ececec" />
<clipPath id="c3"><rect x="841" y="260" width="300" height="200"/></clipPath>
<g clip-path="url(#c3)"><rect x="882.6" y="232" width="211.9" height="30.2" rx="4" fill="#fff" filter="url(#sh3)"/></g>
<rect x="884.00" y="301.50" width="209.00" height="29.80" fill="#fff" rx="4" stroke="#dadce0" stroke-width="1" />
<rect x="884.00" y="372.30" width="103.80" height="30.00" fill="#fff" rx="4" stroke="#dadce0" stroke-width="1" />
<rect x="996.10" y="372.30" width="96.90" height="30.00" fill="#fff" rx="4" stroke="#dadce0" stroke-width="1" />
<svg x="1076.25" y="384.90" width="5.7" height="3.0500000000000003" viewBox="0 0 10 5"><path d="M0 0h10L5 5z" fill="#bdc1c6"/></svg>
<rect x="660.00" y="259.50" width="180.00" height="173.50" fill="#fff" />
<rect x="660.00" y="311.40" width="180.00" height="23.50" fill="#f1f3f4" />
<svg x="822.40" y="320.80" width="5" height="4.8" viewBox="0 0 6 5.6"><path d="M0 0l6 2.8-6 2.8z" fill="#202124"/></svg></svg>
<div class="l"><span class="t" style="top:279.01px;font-size:9.2px;color:#5f6368;left:883.40px;">Текст заголовка</span>
<span class="t" style="top:355.81px;font-size:9.2px;color:#5f6368;right:19.50px;">ви</span>
<span class="t" style="top:419.81px;font-size:9.2px;color:#5f6368;left:883.50px;">Формат назви</span>
<span class="t" style="top:419.81px;font-size:9.2px;color:#5f6368;left:995.60px;">Колір тексту назви</span>
<span class="t" style="top:270.82px;font-size:10.85px;color:#3c4043;left:672.00px;">Редагувати діаграму</span>
<span class="t" style="top:294.42px;font-size:10.85px;color:#3c4043;left:672.00px;">Видалити діаграму</span>
<span class="t" style="top:318.02px;font-size:10.85px;color:#3c4043;left:672.00px;">Завантажити</span>
<span class="t" style="top:341.62px;font-size:10.85px;color:#3c4043;left:672.00px;">Опублікувати діаграму</span>
<span class="t" style="top:365.22px;font-size:10.85px;color:#3c4043;left:672.00px;">Копіювати діаграму</span>
<span class="t" style="top:388.82px;font-size:10.85px;color:#3c4043;left:672.00px;">Перемістити на власний аркуш</span>
<span class="t" style="top:412.42px;font-size:10.85px;color:#3c4043;left:672.00px;">Текст заміщення</span></div>
<svg class="l" width="1106" height="445" viewBox="0 0 1106 445"><rect x="839.20" y="311.60" width="236.80" height="81.00" fill="#fff" rx="3.5" filter="url(#sh2)"/></svg>
<div class="l"><span class="t" style="top:323.37px;font-size:10.55px;color:#3c4043;left:868.50px;">Зображення PNG (.png)</span>
<span class="t" style="top:346.87px;font-size:10.78px;color:#3c4043;left:868.50px;">Документ PDF (.pdf)</span>
<span class="t" style="top:370.66px;font-size:10.8px;color:#3c4043;left:868.50px;">Масштабована векторна графіка (.svg)</span>
<div class="t" style="left:812px;top:59.2px;font-size:25.85px;line-height:30.85px;color:#1b1b1b;white-space:normal;width:290px;">вказівник миші на<br>верхній лівий кут<br>діаграми та натисніть<br>позначку з трьома<br>крапками</div></div>
</body></html>
